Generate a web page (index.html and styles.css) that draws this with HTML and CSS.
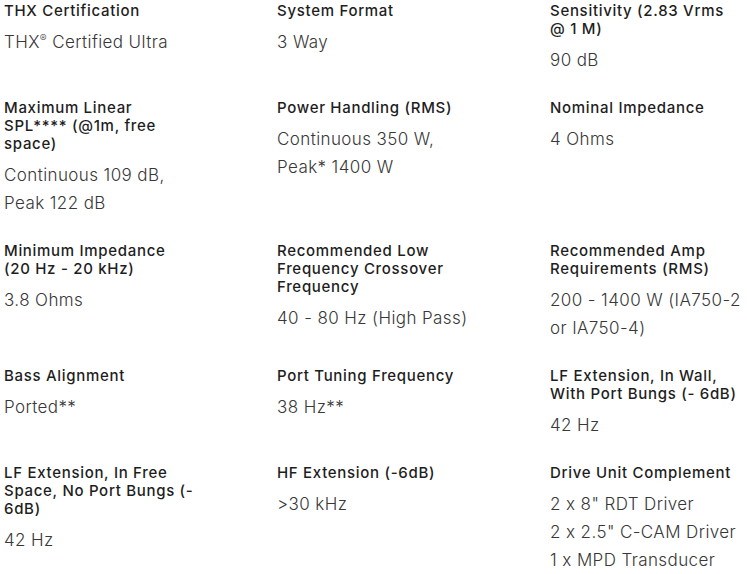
FILE: index.html
```html
<!DOCTYPE html>
<html lang="en">
<head>
<meta charset="utf-8">
<title>Specifications</title>
<link rel="stylesheet" href="styles.css">
</head>
<body>
<div class="specs">
  <div class="spec"><div class="label">THX Certification</div><div class="value">THX<sup>®</sup> Certified Ultra</div></div>
  <div class="spec"><div class="label">System Format</div><div class="value">3 Way</div></div>
  <div class="spec"><div class="label">Sensitivity (2.83 Vrms<br>@ 1 M)</div><div class="value">90 dB</div></div>

  <div class="spec"><div class="label">Maximum Linear<br>SPL**** (@1m, free<br>space)</div><div class="value">Continuous 109 dB,<br>Peak 122 dB</div></div>
  <div class="spec"><div class="label">Power Handling (RMS)</div><div class="value">Continuous 350 W,<br>Peak* 1400 W</div></div>
  <div class="spec"><div class="label">Nominal Impedance</div><div class="value">4 Ohms</div></div>

  <div class="spec"><div class="label">Minimum Impedance<br>(20 Hz - 20 kHz)</div><div class="value">3.8 Ohms</div></div>
  <div class="spec"><div class="label">Recommended Low<br>Frequency Crossover<br>Frequency</div><div class="value">40 - 80 Hz (High Pass)</div></div>
  <div class="spec"><div class="label">Recommended Amp<br>Requirements (RMS)</div><div class="value">200 - 1400 W (IA750-2<br>or IA750-4)</div></div>

  <div class="spec"><div class="label">Bass Alignment</div><div class="value">Ported**</div></div>
  <div class="spec"><div class="label">Port Tuning Frequency</div><div class="value">38 Hz**</div></div>
  <div class="spec"><div class="label">LF Extension, In Wall,<br>With Port Bungs (- 6dB)</div><div class="value">42 Hz</div></div>

  <div class="spec"><div class="label">LF Extension, In Free<br>Space, No Port Bungs (-<br>6dB)</div><div class="value">42 Hz</div></div>
  <div class="spec"><div class="label">HF Extension (-6dB)</div><div class="value">&gt;30 kHz</div></div>
  <div class="spec"><div class="label">Drive Unit Complement</div><div class="value">2 x 8" RDT Driver<br>2 x 2.5" C-CAM Driver<br>1 x MPD Transducer</div></div>
</div>
</body>
</html>
```
FILE: styles.css
```css
html, body {
  margin: 0;
  padding: 0;
  background: #ffffff;
  overflow: hidden;
}

body {
  font-family: "Inter", "Open Sans", sans-serif;
  font-feature-settings: "calt" 0;
}

.specs {
  display: grid;
  grid-template-columns: 273px 273px 1fr;
  row-gap: 25px;
  padding: 2px 0 0 4px;
}

.spec {
  display: flex;
  flex-direction: column;
  gap: 7.5px;
  white-space: nowrap;
}

.label {
  font-size: 15px;
  font-weight: 500;
  line-height: 18.2px;
  letter-spacing: 0.7px;
  color: #1e1e1e;
}

.value {
  font-size: 17px;
  font-weight: 300;
  line-height: 28px;
  letter-spacing: 0.4px;
  color: #383838;
}

.value sup {
  font-size: 0.6em;
  line-height: 0;
  vertical-align: 0.6em;
}
```
